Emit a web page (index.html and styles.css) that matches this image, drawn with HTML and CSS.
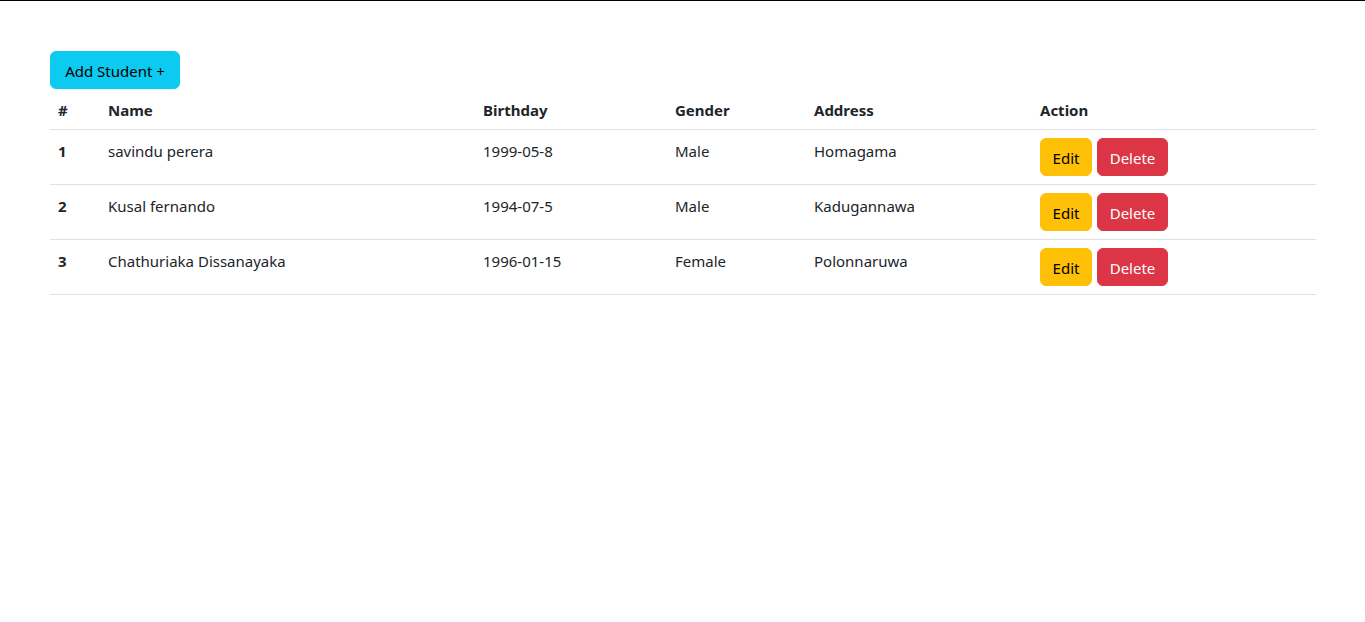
FILE: index.html
```html
<!DOCTYPE html>
<html lang="en">
<head>
<meta charset="utf-8">
<title>Students</title>
<link rel="stylesheet" href="styles.css">
</head>
<body>
<div class="page">
  <div class="content">
    <button class="btn btn-info">Add Student +</button>
    <table class="table">
      <thead>
        <tr>
          <th class="c-num">#</th>
          <th class="c-name">Name</th>
          <th class="c-bday">Birthday</th>
          <th class="c-gender">Gender</th>
          <th class="c-addr">Address</th>
          <th class="c-action">Action</th>
        </tr>
      </thead>
      <tbody>
        <tr>
          <th>1</th>
          <td>savindu perera</td>
          <td>1999-05-8</td>
          <td>Male</td>
          <td>Homagama</td>
          <td class="action-cell"><div class="actions"><button class="btn btn-warning">Edit</button><button class="btn btn-danger">Delete</button></div></td>
        </tr>
        <tr>
          <th>2</th>
          <td>Kusal fernando</td>
          <td>1994-07-5</td>
          <td>Male</td>
          <td>Kadugannawa</td>
          <td class="action-cell"><div class="actions"><button class="btn btn-warning">Edit</button><button class="btn btn-danger">Delete</button></div></td>
        </tr>
        <tr>
          <th>3</th>
          <td>Chathuriaka Dissanayaka</td>
          <td>1996-01-15</td>
          <td>Female</td>
          <td>Polonnaruwa</td>
          <td class="action-cell"><div class="actions"><button class="btn btn-warning">Edit</button><button class="btn btn-danger">Delete</button></div></td>
        </tr>
      </tbody>
    </table>
  </div>
</div>
</body>
</html>
```

FILE: styles.css
```css
* { box-sizing: border-box; }
html, body { margin: 0; padding: 0; background: #fff; }
body {
  font-family: "Noto Sans", "Open Sans", sans-serif;
  font-size: 15px;
  line-height: 24px;
  color: #212529;
}
.page {
  border-top: 1px solid #000;
  min-height: 622px;
}
.content {
  padding: 50px 49px 0 50px;
}
.btn {
  display: block;
  font-family: inherit;
  font-size: 15px;
  line-height: 24px;
  padding: 7px 0 5px;
  border: 1px solid transparent;
  border-radius: 6px;
  cursor: pointer;
  height: 38px;
  white-space: nowrap;
  text-align: center;
}
.btn-info { background: #0dcaf0; border-color: #0dcaf0; color: #000; width: 130px; }
.btn-warning { background: #ffc107; border-color: #ffc107; color: #000; width: 52px; }
.btn-danger { background: #dc3545; border-color: #dc3545; color: #fff; width: 71px; }
.table {
  width: 100%;
  border-collapse: collapse;
  table-layout: fixed;
}
.table th, .table td {
  text-align: left;
  padding: 9px 8px 7px;
  border-bottom: 1px solid #dee2e6;
  vertical-align: top;
  white-space: nowrap;
}
.table .action-cell { padding: 8px; }
.table th { font-weight: 700; }
.c-num { width: 50px; }
.c-name { width: 375px; }
.c-bday { width: 192px; }
.c-gender { width: 139px; }
.c-addr { width: 226px; }
.c-action { width: 284px; }
.actions { display: flex; gap: 5px; }
```
